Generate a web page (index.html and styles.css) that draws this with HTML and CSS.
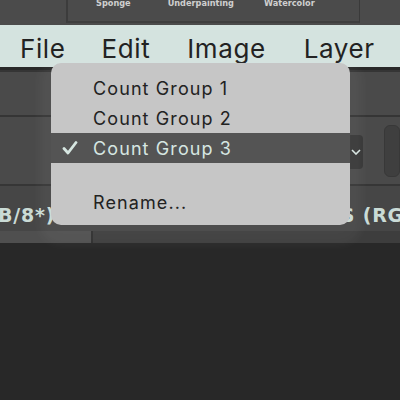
FILE: index.html
```html
<!DOCTYPE html>
<html>
<head>
<meta charset="utf-8">
<link rel="stylesheet" href="styles.css">
</head>
<body>
<div class="screen">
  <div class="topstrip">
    <div class="panel">
      <span class="brush">Sponge</span>
      <span class="brush">Underpainting</span>
      <span class="brush">Watercolor</span>
    </div>
  </div>
  <div class="menubar">
    <span class="mi mi-file">File</span>
    <span class="mi mi-edit">Edit</span>
    <span class="mi mi-image">Image</span>
    <span class="mi mi-layer">Layer</span>
  </div>
  <div class="options">
    <div class="opt-row opt-a"></div>
    <div class="opt-row opt-b">
      <div class="select"><svg width="10" height="6" viewBox="0 0 10 6"><path d="M1 1 L5 5 L9 1" fill="none" stroke="#d8e6e2" stroke-width="1.6"/></svg></div>
      <div class="box"></div>
    </div>
  </div>
  <div class="tabs">
    <div class="tab-row">
      <span class="tab-text left">B/8*)</span>
      <span class="tab-text right">S (RG</span>
    </div>
    <div class="tab-strip"><div class="tab-active"></div></div>
  </div>
  <div class="canvas"></div>

  <div class="menu">
    <div class="item">Count Group 1</div>
    <div class="item">Count Group 2</div>
    <div class="item selected"><svg class="check" width="16" height="14" viewBox="0 0 16 14"><path d="M2 7.5 L6 12 L14 1.5" fill="none" stroke="#d6e6e1" stroke-width="2.8" stroke-linecap="round" stroke-linejoin="round"/></svg>Count Group 3</div>
    <div class="spacer"></div>
    <div class="item">Rename...</div>
  </div>
</div>
</body>
</html>
```
FILE: styles.css
```css
html, body {
  margin: 0;
  padding: 0;
  background: #282828;
}
.screen {
  position: relative;
  width: 400px;
  height: 400px;
  overflow: hidden;
  font-family: "Inter", "Liberation Sans", sans-serif;
}
.topstrip {
  height: 25px;
  background: #4b4b4b;
  padding-left: 58px;
  box-sizing: border-box;
  overflow: hidden;
}
.panel {
  height: 23px;
  width: 294px;
  border-left: 2px solid #3c3c3c;
  border-right: 1px solid #3a3a3a;
  box-sizing: border-box;
  margin-left: 8px;
  border-bottom: 2px solid #3e3e3e;
  position: relative;
  display: flex;
  align-items: flex-start;
}
.brush {
  font-family: "DejaVu Sans", sans-serif;
  font-size: 8.2px;
  font-weight: bold;
  color: #cfcfcf;
  line-height: 9px;
  margin-top: -1px;
}
.brush:nth-child(1) { margin-left: 28px; }
.brush:nth-child(2) { margin-left: 37px; }
.brush:nth-child(3) { margin-left: 30px; }
.menubar {
  height: 42px;
  background: #d4e3df;
  display: flex;
  align-items: center;
  padding-left: 20px;
}
.mi {
  font-size: 26px;
  color: #222222;
  letter-spacing: 0.6px;
  margin-top: 4px;
}
.mi-edit { margin-left: 36px; }
.mi-image { margin-left: 37px; }
.mi-layer { margin-left: 38px; }
.options {
  background: #4a4a4a;
}
.opt-row {
  border-top: 2px solid #353535;
}
.opt-a {
  height: 43px;
  margin-top: 3px;
}
.opt-b {
  height: 67px;
  position: relative;
  display: flex;
  align-items: center;
}
.select {
  margin-left: 350px;
  width: 18px;
  height: 34px;
  background: #383838;
  border-radius: 0 4px 4px 0;
  display: flex;
  align-items: center;
  justify-content: center;
  margin-top: 2px;
}
.box {
  margin-left: 21px;
  width: 20px;
  height: 50px;
  background: #3f3f3f;
  border-radius: 6px;
  border: 1px solid #383838;
}
.tabs {
  border-top: 2px solid #363636;
}
.tab-row {
  height: 45px;
  background: #464646;
  position: relative;
  display: flex;
  align-items: center;
  justify-content: space-between;
}
.tab-text {
  font-family: "DejaVu Sans", sans-serif;
  font-weight: bold;
  font-size: 19px;
  letter-spacing: 0.8px;
  color: #cadbd6;
  margin-top: 12px;
}
.tab-text.left { margin-left: -2px; }
.tab-text.right { margin-right: -4px; }
.tab-strip {
  height: 12px;
  background: #3d3d3d;
}
.tab-active {
  width: 91px;
  height: 12px;
  background: #4f4f4f;
  border-right: 2px solid #2e2e2e;
}
.canvas {
  height: 160px;
  background: #282828;
}
.menu {
  position: absolute;
  left: 51px;
  top: 63px;
  width: 299px;
  height: 162px;
  box-sizing: border-box;
  background: #c6c6c6;
  border-radius: 10px;
  padding-top: 10px;
  box-shadow: 0 8px 10px 12px rgba(255, 255, 255, 0.045);
}
.item {
  height: 30px;
  display: flex;
  align-items: center;
  padding-left: 42px;
  font-size: 18px;
  letter-spacing: 1.1px;
  color: #222222;
  position: relative;
}
.item.selected {
  background: #545454;
  color: #d6e6e1;
}
.check {
  position: absolute;
  left: 11px;
  top: 8px;
}
.spacer {
  height: 24px;
}
```
